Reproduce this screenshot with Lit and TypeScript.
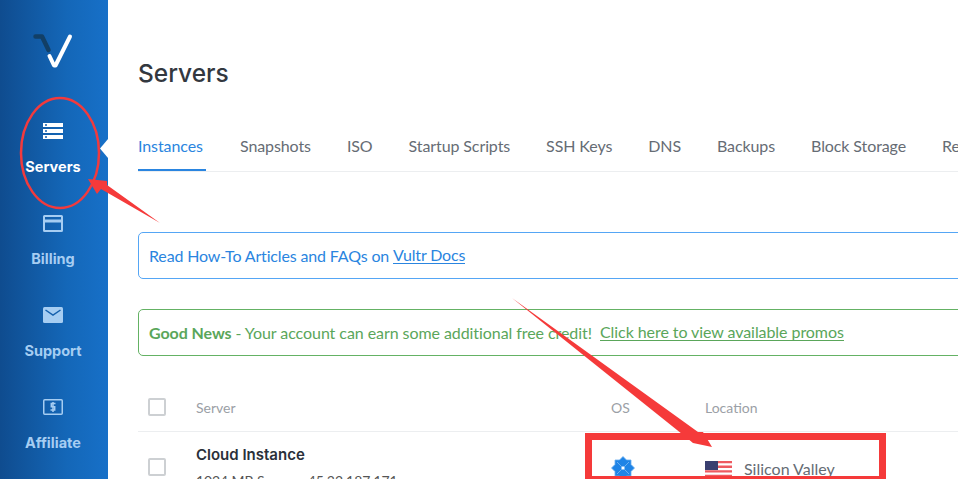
import { LitElement, html, css } from "lit";
import { customElement } from "lit/decorators.js";

const serverIcon = html`<svg width="20" height="16" viewBox="0 0 20 16"><path fill="#fff" fill-rule="evenodd" d="M0 0h20v4H0zM2 1.300h2v1.500H2zM0 6h20v4H0zM2 7.300h2v1.500H2zM0 12h20v4H0zM2 13.300h2v1.500H2z"/></svg>`;
const billingIcon = html`<svg width="20" height="17" viewBox="0 0 20 17"><path fill="#a6cdf2" fill-rule="evenodd" d="M1.500 0h17A1.500 1.500 0 0 1 20 1.500v14a1.500 1.500 0 0 1-1.500 1.500h-17A1.500 1.500 0 0 1 0 15.500v-14A1.500 1.500 0 0 1 1.500 0zM2 2v2.500h16V2zM2 7.500V15h16V7.500z"/></svg>`;
const supportIcon = html`<svg width="20" height="16" viewBox="0 0 20 16"><rect width="20" height="16" rx="1.500" fill="#a6cdf2"/><path d="M2.500 3l7.500 5 7.500-5" fill="none" stroke="#1560ad" stroke-width="1.500"/></svg>`;
const affiliateIcon = html`<svg width="20" height="16" viewBox="0 0 20 16"><rect x=".75" y=".75" width="18.500" height="14.500" rx="1" fill="none" stroke="#a6cdf2" stroke-width="1.500"/><path d="M12.500 4.500H8.300v3.300h3.400v3.300H7.500M10 3v10" fill="none" stroke="#a6cdf2" stroke-width="1.500"/></svg>`;

@customElement("app-root")
export class AppRoot extends LitElement {
  static styles = css`
    :host { display: block; width: 958px; height: 479px; position: relative; overflow: hidden; background: #fff; font-family: "Lato", "Open Sans", sans-serif; }
    * { box-sizing: border-box; }
    .layout { display: flex; height: 479px; overflow: hidden; }
    .side { width: 108px; flex: none; background: linear-gradient(90deg, #0f4c8f 0%, #1467b8 62%, #1770c8 100%); display: flex; flex-direction: column; align-items: center; padding: 33px 2px 0 0; overflow: hidden; }
    .logo { flex: none; display: block; height: 36px; margin-bottom: 54px; }
    .nav { flex: none; display: flex; flex-direction: column; align-items: center; width: 100%; height: 92px; color: #a6cdf2; }
    .ico { height: 17px; margin-bottom: 18px; }
    .ico svg { display: block; }
    .nav.on { color: #fff; }
    .lbl { line-height: 18px; font-family: "Inter", sans-serif; font-weight: 700; font-size: 14.500px; }
    .main { flex: 1; min-width: 0; padding: 0 0 0 30px; overflow: hidden; }
    h1 { margin: 57px 0 0; font-size: 24.500px; line-height: 32px; font-weight: 500; color: #33383f; font-family: "Inter", sans-serif; }
    .tabs { display: flex; gap: 36px; height: 50px; margin-top: 33px; border-bottom: 1px solid #eceef0; white-space: nowrap; font-size: 16px; letter-spacing: -.1px; color: #666c74; padding-top: 13px; width: 900px; }
    .tab { height: 36px; line-height: 22px; flex: none; }
    .tab.on { color: #2a85e0; border-bottom: 2px solid #2a85e0; width: 68px; margin-right: -2px; }
    .notice { width: 900px; height: 47px; border-radius: 5px; border: 1px solid; padding: 0 10px 1px; display: flex; align-items: center; font-size: 16px; white-space: pre; }
    .notice.blue { border-color: #55a6f5; color: #2a85e0; margin-top: 60px; letter-spacing: -.15px; }
    .notice.green { border-color: #64b264; color: #5aa65a; margin-top: 30px; letter-spacing: -.07px; }
    .notice a { color: inherit; text-decoration: none; border-bottom: 1px solid currentColor; line-height: 17px; }
    .notice b { font-weight: 700; }
    .thead { display: flex; align-items: center; height: 49px; margin-top: 27px; border-bottom: 1px solid #eceef0; font-size: 14px; color: #9ba0a6; width: 900px; }
    .thead span:not(.chk) { margin-top: 1px; }
    .chk { width: 18px; height: 18px; border: 2px solid #cdd0d3; border-radius: 2px; flex: none; background: #fff; }
    .c1 { margin-left: 10px; }
    .c2 { margin-left: 30px; width: 415px; flex: none; }
    .c3 { width: 94px; flex: none; }
    .row { display: flex; align-items: flex-start; width: 900px; padding-top: 13px; }
    .row .chk { margin-top: 13px; }
    .name { color: #2a303a; line-height: 18px; margin-top: 1px; font-family: "Inter", sans-serif; font-size: 15px; font-weight: 600; }
    .sub { font-size: 14px; letter-spacing: -.1px; color: #555; margin-top: 9px; line-height: 16px; white-space: nowrap; }
    .cellos { padding-top: 11px; }
    .loc { display: flex; align-items: flex-start; gap: 12px; font-size: 16px; line-height: 18px; color: #666c74; padding-top: 15px; }
    .flag { margin-top: 1px; }
    .loc svg, .cellos svg { display: block; flex: none; }
    .marks { position: absolute; left: 0; top: 0; pointer-events: none; }
  `;

  render() {
    const tabs = ["Snapshots", "ISO", "Startup Scripts", "SSH Keys", "DNS", "Backups", "Block Storage", "Reserved IPs"];
    return html`
      <div class="layout">
        <aside class="side">
          <svg class="logo" width="42" height="36" viewBox="0 0 42 36">
            <path d="M3.500 3.500H10L16.500 17" fill="none" stroke="#123f66" stroke-width="4.500" stroke-linejoin="round" stroke-linecap="round"/>
            <path d="M17.500 23L22 32.500h1.500L38 3.500" fill="none" stroke="#fff" stroke-width="4" stroke-linejoin="round" stroke-linecap="round"/>
          </svg>
          <div class="nav on"><div class="ico">${serverIcon}</div><span class="lbl">Servers</span></div>
          <div class="nav"><div class="ico">${billingIcon}</div><span class="lbl">Billing</span></div>
          <div class="nav"><div class="ico">${supportIcon}</div><span class="lbl">Support</span></div>
          <div class="nav"><div class="ico">${affiliateIcon}</div><span class="lbl">Affiliate</span></div>
        </aside>
        <main class="main">
          <h1>Servers</h1>
          <nav class="tabs">
            <div class="tab on">Instances</div>
            ${tabs.map((t) => html`<div class="tab">${t}</div>`)}
          </nav>
          <div class="notice blue">Read How-To Articles and FAQs on <a>Vultr Docs</a></div>
          <div class="notice green"><b>Good News</b> - Your account can earn some additional free credit!  <a>Click here to view available promos</a></div>
          <div class="thead">
            <span class="chk c1"></span>
            <span class="c2">Server</span>
            <span class="c3">OS</span>
            <span>Location</span>
          </div>
          <div class="row">
            <span class="chk c1"></span>
            <div class="c2"><div class="name">Cloud Instance</div><div class="sub">1024 MB Server - 45.32.187.171</div></div>
            <div class="c3 cellos">
              <svg width="24" height="24" viewBox="0 0 24 24">
                <path fill="#1f84e6" stroke="#6aaef0" stroke-width=".8" d="M12 .5l3.500 3.500h4.500v4.500L23.500 12 20 15.500V20h-4.500L12 23.500 8.500 20H4v-4.500L.5 12 4 8.500V4h4.500z"/>
                <path stroke="#6aaef0" stroke-width="1" d="M6 6l12 12M18 6L6 18"/>
                <path fill="#fff" d="M12 10l2 2-2 2-2-2z"/>
              </svg>
            </div>
            <div class="loc">
              <svg class="flag" width="27" height="16" viewBox="0 0 27 16"><rect width="27" height="16" fill="#fff"/><path fill="#ee5a60" d="M0 0h27v2.300H0zM0 4.600h27v2.300H0zM0 9.200h27v2.300H0zM0 13.700h27V16H0z"/><rect width="13" height="9" fill="#3a3f70"/></svg>
              <span>Silicon Valley</span>
            </div>
          </div>
        </main>
      </div>
      <svg class="marks" width="958" height="479" viewBox="0 0 958 479">
        <path d="M108 139l-8 9.500 8 9.500z" fill="#fff"/>
        <ellipse cx="60" cy="153" rx="39" ry="55" fill="none" stroke="#f23a3d" stroke-width="2.500"/>
        <path d="M160 223L107 185V181L88 179 97 194 101 189z" fill="#f53a3a"/>
        <path d="M512 298L698 432 703 432 712 447 693 443 687 438z" fill="#f53a3a"/>
        <rect x="588.500" y="436.500" width="294" height="43" fill="none" stroke="#f53a3a" stroke-width="7"/>
      </svg>
    `;
  }
}
